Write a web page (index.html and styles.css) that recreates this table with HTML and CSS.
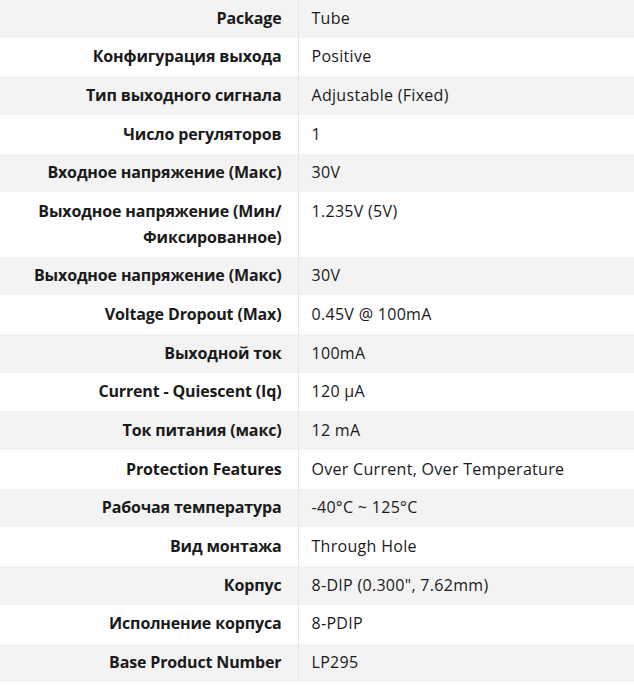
FILE: index.html
```html
<!DOCTYPE html>
<html lang="ru">
<head>
<meta charset="utf-8">
<title>Specs</title>
<link rel="stylesheet" href="styles.css">
</head>
<body>
<table class="specs">
  <tbody>
    <tr><th>Package</th><td>Tube</td></tr>
    <tr><th>Конфигурация выхода</th><td>Positive</td></tr>
    <tr><th>Тип выходного сигнала</th><td>Adjustable (Fixed)</td></tr>
    <tr><th>Число регуляторов</th><td>1</td></tr>
    <tr><th>Входное напряжение (Макс)</th><td>30V</td></tr>
    <tr><th>Выходное напряжение (Мин/<br>Фиксированное)</th><td>1.235V (5V)</td></tr>
    <tr><th>Выходное напряжение (Макс)</th><td>30V</td></tr>
    <tr><th>Voltage Dropout (Max)</th><td>0.45V @ 100mA</td></tr>
    <tr><th>Выходной ток</th><td>100mA</td></tr>
    <tr><th>Current - Quiescent (Iq)</th><td>120 µA</td></tr>
    <tr><th>Ток питания (макс)</th><td>12 mA</td></tr>
    <tr><th>Protection Features</th><td>Over Current, Over Temperature</td></tr>
    <tr><th>Рабочая температура</th><td>-40°C ~ 125°C</td></tr>
    <tr><th>Вид монтажа</th><td>Through Hole</td></tr>
    <tr><th>Корпус</th><td>8-DIP (0.300", 7.62mm)</td></tr>
    <tr><th>Исполнение корпуса</th><td>8-PDIP</td></tr>
    <tr><th>Base Product Number</th><td>LP295</td></tr>
  </tbody>
</table>
</body>
</html>
```
FILE: styles.css
```css
html, body {
  margin: 0;
  padding: 0;
  background: #ffffff;
}
body {
  font-family: "Open Sans", "Noto Sans", sans-serif;
  font-size: 16px;
  color: #1a1a1a;
}
.specs {
  width: 634px;
  border-collapse: collapse;
  margin-top: -1px;
}
.specs tr:nth-child(odd) {
  background: #f3f3f3;
}
.specs th,
.specs td {
  line-height: 25.5px;
  padding: 6.6px 0;
  vertical-align: top;
}
.specs th {
  width: 298px;
  box-sizing: border-box;
  text-align: right;
  font-weight: 700;
  letter-spacing: -0.15px;
  padding-right: 16px;
  padding-left: 8px;
  border-right: 1px solid #e4e4e4;
}
.specs td {
  text-align: left;
  font-weight: 400;
  letter-spacing: 0.3px;
  padding-left: 13px;
}
```
